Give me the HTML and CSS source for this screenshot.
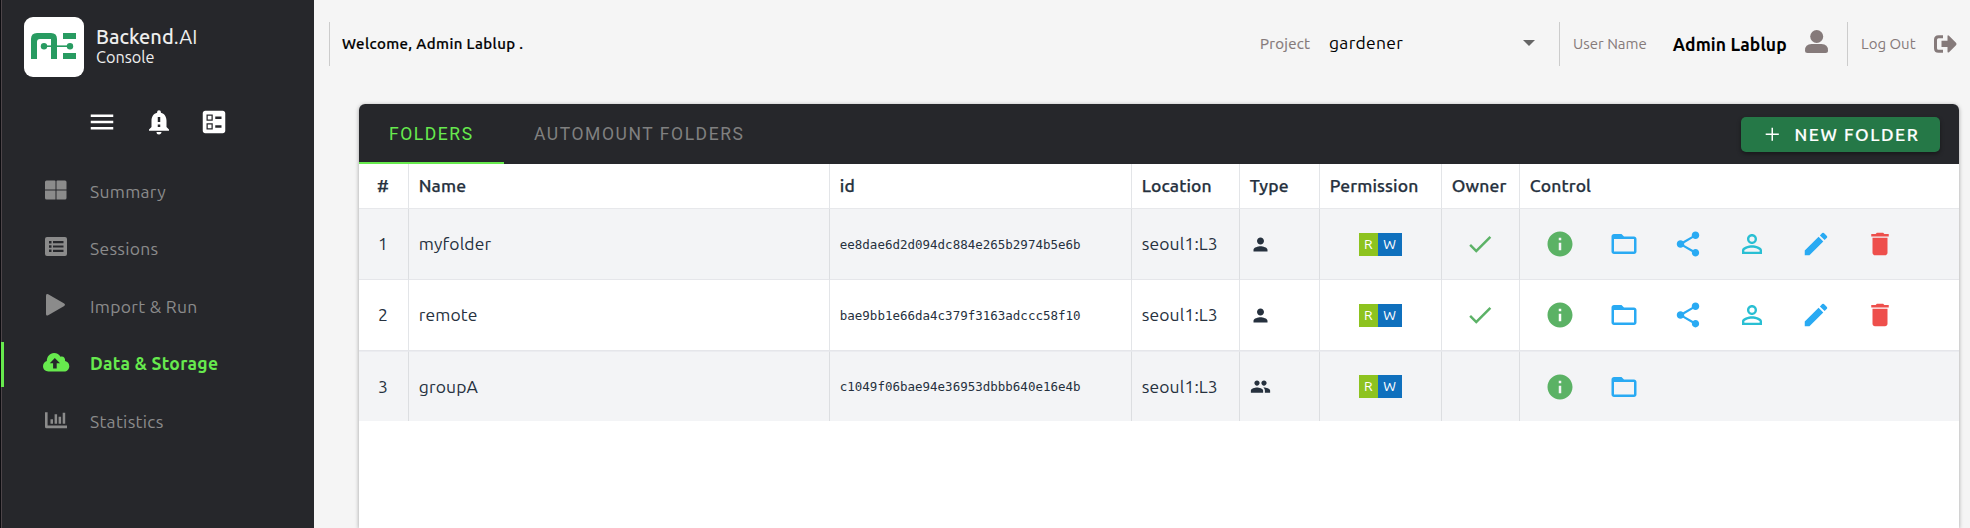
FILE: index.html
```html
<!DOCTYPE html>
<html lang="en">
<head>
<meta charset="utf-8">
<title>Backend.AI Console</title>
<link rel="stylesheet" href="styles.css">
</head>
<body>
<svg class="defs" aria-hidden="true">
  <symbol id="info" viewBox="0 0 24 24"><path d="M12 2C6.48 2 2 6.48 2 12s4.480 10 10 10 10-4.480 10-10S17.520 2 12 2zm1 15h-2v-6h2v6zm0-8h-2V7h2v2z"/></symbol>
  <symbol id="folder" viewBox="0 0 24 24"><path d="M20 6h-8l-2-2H4c-1.100 0-1.990.900-1.990 2L2 18c0 1.100.900 2 2 2h16c1.100 0 2-.900 2-2V8c0-1.100-.900-2-2-2zm0 12H4V8h16v10z"/></symbol>
  <symbol id="share" viewBox="0 0 24 24"><path d="M18 16.080c-.760 0-1.440.300-1.960.770L8.910 12.700c.050-.230.090-.460.090-.700s-.040-.470-.090-.700l7.050-4.110c.540.500 1.250.810 2.040.810 1.660 0 3-1.340 3-3s-1.340-3-3-3-3 1.340-3 3c0 .240.040.470.090.700L8.040 9.810C7.500 9.310 6.790 9 6 9c-1.660 0-3 1.340-3 3s1.340 3 3 3c.790 0 1.500-.310 2.040-.810l7.120 4.160c-.050.210-.080.430-.080.650 0 1.610 1.310 2.920 2.920 2.920s2.920-1.310 2.920-2.920-1.310-2.920-2.920-2.920z"/></symbol>
  <symbol id="perm" viewBox="0 0 24 24"><path d="M12 5.900a2.100 2.100 0 110 4.200 2.100 2.100 0 010-4.200m0 9c2.970 0 6.100 1.460 6.100 2.100v1.100H5.900V17c0-.640 3.130-2.100 6.100-2.100M12 4C9.790 4 8 5.790 8 8s1.790 4 4 4 4-1.790 4-4-1.790-4-4-4zm0 9c-2.670 0-8 1.340-8 4v3h16v-3c0-2.660-5.330-4-8-4z"/></symbol>
  <symbol id="edit" viewBox="0 0 24 24"><path d="M3 17.250V21h3.750L17.810 9.940l-3.750-3.750L3 17.250zM20.710 7.040a1 1 0 000-1.410l-2.340-2.340a1 1 0 00-1.410 0l-1.830 1.830 3.750 3.750 1.830-1.830z"/></symbol>
  <symbol id="delete" viewBox="0 0 24 24"><path d="M6 19c0 1.100.900 2 2 2h8c1.100 0 2-.900 2-2V7H6v12zM19 4h-3.500l-1-1h-5l-1 1H5v2h14V4z"/></symbol>
  <symbol id="done" viewBox="0 0 24 24"><path d="M9 16.200L4.800 12l-1.400 1.400L9 19 21 7l-1.400-1.400L9 16.200z"/></symbol>
  <symbol id="person" viewBox="0 0 24 24"><path d="M12 12c2.210 0 4-1.790 4-4s-1.790-4-4-4-4 1.790-4 4 1.790 4 4 4zm0 2c-2.670 0-8 1.340-8 4v2h16v-2c0-2.660-5.330-4-8-4z"/></symbol>
  <symbol id="group" viewBox="0 0 24 24"><path d="M16 11c1.660 0 2.990-1.340 2.990-3S17.660 5 16 5s-3 1.340-3 3 1.340 3 3 3zm-8 0c1.660 0 2.990-1.340 2.990-3S9.660 5 8 5 5 6.340 5 8s1.340 3 3 3zm0 2c-2.330 0-7 1.170-7 3.500V19h14v-2.500c0-2.330-4.670-3.500-7-3.500zm8 0c-.290 0-.620.020-.970.050 1.160.840 1.970 1.970 1.970 3.450V19h6v-2.500c0-2.330-4.670-3.500-7-3.500z"/></symbol>
</svg>

<aside class="sidebar">
  <div class="brand">
    <svg class="logo" viewBox="0 0 60 60">
      <rect width="60" height="60" rx="9" fill="#fff"/>
      <path fill="#289b61" d="M7 42V22q0-6 6-6h14q6 0 6 6v20h-6V22H16q-3 0-3 3v17z M39 16h13v6H39z M39 36h13v6H39z"/>
      <path stroke="#289b61" stroke-width="1.600" d="M20 29.200h26"/>
      <circle cx="20" cy="29.200" r="3.200" fill="#289b61"/><circle cx="46" cy="29.200" r="3.200" fill="#289b61"/>
    </svg>
    <div class="brand-text"><span class="brand-name"><b>Backend</b>.AI</span><span class="brand-sub">Console</span></div>
  </div>
  <div class="tools">
    <svg viewBox="0 0 24 24"><path d="M3 18h18v-2H3v2zm0-5h18v-2H3v2zm0-7v2h18V6H3z"/></svg>
    <svg viewBox="0 0 24 24"><path fill-rule="evenodd" d="M18 16v-5c0-3.070-1.640-5.640-4.500-6.320V4a1.500 1.500 0 00-3 0v.680C7.630 5.360 6 7.920 6 11v5l-2 2v1h16v-1l-2-2zm-5 0h-2v-2h2v2zm0-4h-2V8h2v4zm-1 10c1.100 0 2-.900 2-2h-4a2 2 0 002 2z"/></svg>
    <svg viewBox="0 0 24 24"><path fill-rule="evenodd" d="M13 9.500h5v-2h-5v2zm0 7h5v-2h-5v2zM19 21H5c-1.100 0-2-.900-2-2V5c0-1.100.900-2 2-2h14c1.100 0 2 .900 2 2v14c0 1.100-.900 2-2 2zM6 11h5V6H6v5zm1-4h3v3H7V7zM6 18h5v-5H6v5zm1-4h3v3H7v-3z"/></svg>
  </div>
  <nav class="menu">
    <a class="item"><svg viewBox="0 0 28 24"><path d="M4.500 2.500h8.300q.700 0 .700.700V11.500H3V4q0-1.500 1.500-1.500z M15.200 2.500h7.800q1.500 0 1.500 1.500v7.500h-10V3.200q0-.700.700-.700z M3 12.500h10.500v9H4.500Q3 21.500 3 20z M14.500 12.500h10V20q0 1.500-1.500 1.500h-8.500z"/></svg>Summary</a>
    <a class="item"><svg viewBox="0 0 28 24"><path fill-rule="evenodd" d="M5 2h18q2 0 2 2v15q0 2-2 2H5q-2 0-2-2V4q0-2 2-2z M7 6v2.500h2.500V6z M11 6v2.200h10.500V6z M7 10.300v2.500h2.500v-2.500z M11 10.400v2.200h10.500v-2.200z M7 14.600v2.500h2.500v-2.500z M11 14.700v2.200h10.500v-2.200z"/></svg>Sessions</a>
    <a class="item"><svg viewBox="0 0 28 24"><path d="M4 2.500Q4 .300 6.200 1.300L22.200 10.500Q24 11.800 22.200 13L6.200 22.200Q4 23.200 4 21z"/></svg>Import &amp; Run</a>
    <a class="item active"><svg viewBox="0 0 28 24"><path fill-rule="evenodd" d="M6.500 21.500C3.300 21.500 1 19.200 1 16.300c0-2.500 1.500-4.400 3.800-5.200C4.800 6.700 7.800 3 12 3c3 0 5.300 1.500 6.500 3.800 2.600-1 5 1 4.600 4.200 2.500.600 4.200 2.600 4.200 5.200 0 3-2.300 5.300-5.300 5.300z M12.800 8l-5 5.200h3.300v5.300h3.600v-5.300h3.300z"/></svg>Data &amp; Storage</a>
    <a class="item"><svg viewBox="0 0 28 24"><path d="M3 4.200h2.600v13.200H25v2.800H4.500Q3 20.200 3 18.700z M8.500 11.200h2.500v4.500H8.500z M12.600 6.200h2.500v9.500h-2.500z M16.600 8.700h2.500v7h-2.500z M20.700 4.700h2.500v11h-2.500z"/></svg>Statistics</a>
  </nav>
</aside>

<main class="main">
  <header class="topbar">
    <div class="welcome">Welcome, Admin Lablup .</div>
    <div class="project"><span class="label project-label">Project</span><span class="select">gardener<i class="caret"></i></span></div>
    <div class="user"><span class="label">User Name</span><b class="user-name">Admin Lablup</b>
      <svg class="user-icon" viewBox="0 0 23 23"><circle cx="11.700" cy="6.500" r="6.500"/><path d="M6.500 14h10q6.500 0 6.500 6.500Q23 23 20.500 23h-18Q0 23 0 20.500 0 14 6.500 14z"/></svg>
    </div>
    <div class="logout"><span class="label">Log Out</span>
      <svg class="logout-icon" viewBox="0 0 23 18"><path d="M9 1.800H4.500Q1.500 1.800 1.500 4.800v8.400q0 3 3 3H9" fill="none" stroke="#857a7a" stroke-width="3"/><path d="M7.500 5.800h6V1.300q0-1.600 1.500-.600l7 7q1 1.300 0 2.500l-7 7q-1.500 1-1.500-.600v-4.500h-6z"/></svg>
    </div>
  </header>

  <section class="card">
    <div class="tabs">
      <div class="tab tab-active">FOLDERS</div>
      <div class="tab">AUTOMOUNT FOLDERS</div>
      <button class="new-folder"><svg viewBox="0 0 24 24"><path d="M19 12.800h-6.200v6.200h-1.600v-6.200H5v-1.600h6.200V5h1.600v6.200H19z"/></svg>NEW FOLDER</button>
    </div>
    <table class="grid">
      <colgroup><col class="c-num"><col class="c-name"><col class="c-id"><col class="c-loc"><col class="c-type"><col class="c-perm"><col class="c-owner"><col></colgroup>
      <thead><tr><th class="center">#</th><th>Name</th><th>id</th><th>Location</th><th>Type</th><th>Permission</th><th>Owner</th><th>Control</th></tr></thead>
      <tbody>
        <tr class="odd"><td class="center">1</td><td>myfolder</td><td class="mono">ee8dae6d2d094dc884e265b2974b5e6b</td><td>seoul1:L3</td><td><svg class="type"><use href="#person"/></svg></td><td><div class="perm"><span class="r">R</span><span class="w">W</span></div></td><td><svg class="done"><use href="#done"/></svg></td>
          <td><div class="controls"><svg class="green"><use href="#info"/></svg><svg class="blue"><use href="#folder"/></svg><svg class="blue"><use href="#share"/></svg><svg class="cyan"><use href="#perm"/></svg><svg class="blue"><use href="#edit"/></svg><svg class="red"><use href="#delete"/></svg></div></td></tr>
        <tr><td class="center">2</td><td>remote</td><td class="mono">bae9bb1e66da4c379f3163adccc58f10</td><td>seoul1:L3</td><td><svg class="type"><use href="#person"/></svg></td><td><div class="perm"><span class="r">R</span><span class="w">W</span></div></td><td><svg class="done"><use href="#done"/></svg></td>
          <td><div class="controls"><svg class="green"><use href="#info"/></svg><svg class="blue"><use href="#folder"/></svg><svg class="blue"><use href="#share"/></svg><svg class="cyan"><use href="#perm"/></svg><svg class="blue"><use href="#edit"/></svg><svg class="red"><use href="#delete"/></svg></div></td></tr>
        <tr class="odd"><td class="center">3</td><td>groupA</td><td class="mono">c1049f06bae94e36953dbbb640e16e4b</td><td>seoul1:L3</td><td><svg class="type"><use href="#group"/></svg></td><td><div class="perm"><span class="r">R</span><span class="w">W</span></div></td><td></td>
          <td><div class="controls"><svg class="green"><use href="#info"/></svg><svg class="blue"><use href="#folder"/></svg></div></td></tr>
      </tbody>
    </table>
  </section>
</main>
</body>
</html>
```
FILE: styles.css
```css
* { box-sizing: border-box; }

body {
  margin: 0;
  height: 528px;
  display: flex;
  overflow: hidden;
  background: #f5f5f5;
  font: 17.5px/22px Ubuntu, "Noto Sans", sans-serif;
  color: #000;
}

svg { display: block; fill: currentColor; flex: none; }
.defs { display: none; }

/* Sidebar */
.sidebar {
  width: 314px;
  height: 528px;
  flex: none;
  background: #26272b;
  border-left: 1px solid #0c0c10;
  box-shadow: inset 1px 0 #4d4549;
}
.brand { display: flex; padding: 17px 0 0 23px; }
.logo { width: 60px; height: 60px; }
.brand-text { display: flex; flex-direction: column; padding: 9px 0 0 12px; color: #eee; }
.brand-name { font-size: 20px; line-height: 22px; }
.brand-name b { font-weight: 500; }
.brand-sub { font-size: 16.25px; line-height: 18px; }
.tools { display: flex; padding: 30px 0 0 86px; color: #fff; }
.tools svg { width: 30px; height: 30px; margin-right: 27px; }
.tools svg + svg { margin-right: 25px; }

.menu { padding-top: 32.500px; }
.item {
  display: flex;
  align-items: center;
  height: 45px;
  margin-bottom: 12.400px;
  padding-left: 41px;
  color: #8b8b8b;
  letter-spacing: .3px;
}
.item svg { width: 28px; height: 24px; margin: -4px 20px 0 0; }
.active { color: #67ea4e; font-weight: 700; box-shadow: inset 3px 0 #67ea4e; }

/* Top bar */
.main { flex: 1; min-width: 0; }
.topbar { display: flex; height: 104px; padding: 22px 0 0 15px; align-items: flex-start; }
.welcome, .user, .logout { height: 44px; border-left: 1px solid #ccc; display: flex; align-items: center; white-space: nowrap; }
.welcome {
  width: 917px;
  padding: 0 0 0 12px;
  font-size: 15px;
  font-weight: 500;
  letter-spacing: .4px;
  -webkit-text-stroke: .2px;
}
.label { font-size: 15px; color: #857a7a; }
.project { display: flex; height: 44px; width: 313px; align-items: center; }
.project-label { letter-spacing: .3px; padding-left: 14px; width: 83px; -webkit-text-stroke: .2px; }
.select { display: flex; align-items: center; width: 206px; padding-bottom: 2px; letter-spacing: .3px; }
.caret { margin-left: auto; border: 6px solid transparent; border-top-color: #666; border-bottom: 0; }
.user { width: 288px; padding-left: 13px; }
.user-name { margin-left: 26px; padding-top: 2px; letter-spacing: .1px; }
.user-icon { width: 23px; height: 23px; margin: -5px 0 0 18px; color: #857a7a; }
.logout { padding-left: 13px; }
.logout-icon { width: 23px; height: 18px; margin-left: 18px; color: #857a7a; }

/* Card */
.card {
  width: 1600px;
  height: 424px;
  margin-left: 45px;
  background: #fff;
  border-radius: 6px 6px 0 0;
  overflow: hidden;
  box-shadow: 0 1px 4px rgba(0, 0, 0, .35);
}
.tabs { display: flex; height: 60px; background: #26272b; align-items: center; }
.tab {
  height: 60px;
  padding: 0 30px;
  font: 400 17.500px/60px Roboto, sans-serif;
  letter-spacing: 1.560px;
  color: #808080;
}
.tab-active { width: 145px; color: #67ea4e; box-shadow: inset 0 -2px #67ea4e; }
.new-folder {
  display: flex;
  align-items: center;
  width: 199px;
  height: 35px;
  margin: 0 19px 0 auto;
  padding: 0 0 0 20px;
  border: 0;
  border-radius: 5px;
  background: #257847;
  color: #fff;
  font: 500 17.500px/35px Ubuntu, "Noto Sans", sans-serif;
  letter-spacing: 1.560px;
  box-shadow: 0 2px 4px rgba(0, 0, 0, .4);
  -webkit-text-stroke: .2px;
}
.new-folder svg { width: 22.500px; height: 22.500px; margin-right: 11px; }

/* Folder table */
.grid { width: 1600px; table-layout: fixed; border-collapse: separate; border-spacing: 0; color: #26313e; letter-spacing: .120px; }
.c-num { width: 50px; }
.c-name { width: 421px; }
.c-id { width: 302px; }
.c-loc { width: 108px; }
.c-type { width: 80px; }
.c-perm { width: 122px; }
.c-owner { width: 78px; }
th, td { padding: 0 0 0 9.750px; border-right: 1px solid #e3e5e8; text-align: left; white-space: nowrap; }
th:last-child, td:last-child { border-right: 0; }
th { height: 45px; font-weight: 500; border-bottom: 1px solid #e7e8eb; -webkit-text-stroke: .25px; }
td { height: 71px; border-bottom: 1px solid #e5e6ea; }
tbody tr:last-child td { height: 70px; border-bottom: 0; border-top: 1px solid #ebecf0; }
.odd td { background: #f3f4f6; border-right-color: #dcdee1; }
.odd td:last-child { border-right: 0; }
th.center, td.center { padding: 0 1px 0 0; text-align: center; }
.grid .mono { font: 12.500px/20px "DejaVu Sans Mono", monospace; padding: 1px 0 0 9.750px; letter-spacing: 0; }
.type { width: 21px; height: 21px; }
.perm { display: flex; width: 43px; height: 23px; margin-left: 29px; color: #fff; font-size: 13.750px; line-height: 23px; text-align: center; }
.r { width: 19px; background: #8dc31f; }
.w { width: 24px; background: #0f70bd; }
.done { width: 30px; height: 30px; margin-left: 13px; color: #5cb267; }
.controls { display: flex; gap: 34px; padding-left: 15px; }
.controls svg { width: 30px; height: 30px; }
.green { color: #5bb265; }
.blue { color: #29aaf3; }
.cyan { color: #29bfd3; }
.red { color: #ee4f4c; }
```
